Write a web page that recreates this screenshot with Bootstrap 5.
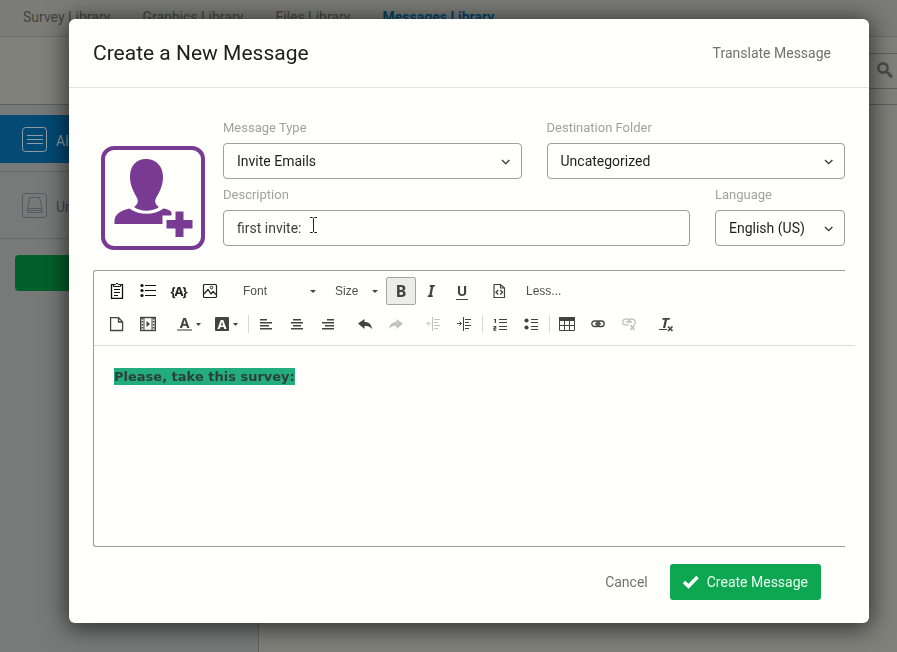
<!DOCTYPE html>
<html lang="en">
<head>
<meta charset="utf-8">
<meta name="viewport" content="width=device-width, initial-scale=1">
<title>Create a New Message</title>
<link href="https://cdn.jsdelivr.net/npm/bootstrap@5.3.0/dist/css/bootstrap.min.css" rel="stylesheet">
<style>
body{font-family:Roboto,"Noto Sans",sans-serif;font-size:14px;line-height:20px;background:#80817b;color:#3f3f3d}
.page{min-height:100vh}
.topnav{height:37px;background:#7b7c77;border-bottom:1px solid #6c6d69;padding:0 23px;gap:32px;line-height:34px}
.topnav a{color:#434341}
.topnav a.current{color:#05466b;font-weight:700}
.subbar{height:68px;border-bottom:1px solid #60615d}
.searchbox{width:56px;height:36px;border:1px solid #5e5f5b;border-right:0;color:#4c4d4a}
.side{width:259px;background:#777a79;border-right:1px solid #60625f;padding-top:10px}
.side a{height:48px;padding-left:22px;gap:9px;color:#454746}
.side a.sel{background:#034a74;color:#8f9ea6}
.side-other{border-top:1px solid #656867;border-bottom:1px solid #656867;margin-top:8px;height:68px}
.side-btn{margin:16px 15px;height:36px;background:#04602b;border-radius:4px}
.msg-dialog{max-width:none;margin:19px 28px 29px 69px}
.msg-box{background:#fffffc;border:0;border-radius:6px;box-shadow:0 3px 24px 2px rgba(0,0,0,.65)}
.msg-head{height:69px;padding:0 38px 0 24px;border-bottom:1px solid #e2e5e2}
.msg-head h1{font-size:21px;line-height:28px;font-weight:400;color:#20201e;margin:0}
.quiet{color:#71716f;font-size:14px}
.msg-body{padding:30px 24px 0}
.kind{padding:28px 18px 0 8px}
.fields{gap:6px}
.fieldrow{gap:25px}
.lang{width:130px}
.fieldrow label{font-size:13px;color:#a1a19f;line-height:20px;margin-bottom:5px}
.fieldrow .form-control,.fieldrow .form-select{height:36px;font-size:14px;line-height:20px;padding:7px 13px;border:1px solid #9d9f9a;border-radius:4px;background-color:#fffffc;color:#1f1f1d}
.fieldrow .form-control{color:#40403e}
.fieldrow .form-select{padding-right:32px;background-size:11px 11px;background-position:right 10px center;background-image:url("data:image/svg+xml,%3Csvg xmlns='http://www.w3.org/2000/svg' viewBox='0 0 11 11'%3E%3Cpath fill='none' stroke='%23333' stroke-width='1.3' d='M2 4l3.7 3.7L9.4 4'/%3E%3C/svg%3E")}
.ibeam{left:85px;top:31px}
.editor{margin-top:20px;border:1px solid #9b9d98;border-right:0;border-radius:3px 0 0 3px}
.tools{margin-right:-10px;padding:6px 8px 7px;border-bottom:1px solid #d9dcd8;gap:5px}
.tools button{width:30px;height:28px;margin-right:1px;padding:0;border:0;background:none;color:#44443f;display:inline-flex;align-items:center;justify-content:center;flex:none;border-radius:2px}
.tools button.duo{width:37px;gap:4px}
.tools button.pressed{background:#ecedea;border:1px solid #a5a7a2;margin-right:0}
.tools button:disabled{color:#c2c3bf}
.tools button.more{width:auto;margin-left:11px;font:12px "Liberation Sans",sans-serif;color:#50504e}
.tools select{appearance:none;border:0;padding:0;height:28px;font:12px "Liberation Sans",sans-serif;color:#50504e;background:url("data:image/svg+xml,%3Csvg xmlns='http://www.w3.org/2000/svg' viewBox='0 0 6 3'%3E%3Cpath fill='%23444' d='M0 0h6L3 3z'/%3E%3C/svg%3E") no-repeat right 1px center/6px 3px}
.tools svg{overflow:visible}
.pick-font{width:74px;margin:0 18px 0 17px}
.pick-size{width:44px;margin-right:7px}
.gap-l{margin-left:6px}
.sep{width:1px;height:18px;background:#d5d7d3;margin:0 2px}
.glyph{font-family:"Noto Sans",sans-serif;font-weight:700;fill:currentColor}
.letter{font:700 16px/24px "Noto Sans",sans-serif}
.letter-u{font-size:14px;line-height:16px;border-bottom:1px solid;padding:0 1px}
.writing{min-height:200px;padding:21px 20px;font:700 13px/20px "DejaVu Sans",sans-serif;color:#2b4138}
.writing span{background:#23ad7f;padding:1px 0}
.msg-foot{padding:17px 48px 23px;gap:22px}
.btn-create{height:36px;padding:0 13px 0 12px;gap:8px;background:#0ca750;border:0;border-radius:3px;color:#e9fff0;font-size:14px}
</style>
</head>
<body>
<div class="page d-flex flex-column">
  <nav class="topnav d-flex flex-shrink-0">
    <a class="text-decoration-none" href="#">Survey Library</a>
    <a class="text-decoration-none" href="#">Graphics Library</a>
    <a class="text-decoration-none" href="#">Files Library</a>
    <a class="text-decoration-none current" href="#">Messages Library</a>
  </nav>
  <div class="subbar d-flex align-items-center justify-content-end flex-shrink-0 overflow-hidden">
    <div class="searchbox d-flex align-items-center justify-content-end pe-1">
      <svg width="16" height="17" viewBox="0 0 16 17" fill="none" stroke="currentColor"><circle cx="6" cy="6" r="4.6" stroke-width="2.6"/><path d="M9.5 9.5L15 15.2" stroke-width="3.2"/></svg>
    </div>
  </div>
  <div class="d-flex flex-grow-1">
    <aside class="side">
      <a class="sel d-flex align-items-center text-decoration-none" href="#">
        <svg width="25" height="25" viewBox="0 0 25 25" fill="none" stroke="currentColor"><rect x=".5" y=".5" width="24" height="24" rx="3"/><path d="M5 8.500h16M5 12.500h16M5 16.500h16"/></svg><span class="pt-1">All Messages</span></a>
      <div class="side-other d-flex align-items-center">
        <a class="d-flex align-items-center text-decoration-none" href="#">
          <svg width="25" height="25" viewBox="0 0 25 25" fill="none" stroke="#555b5c"><rect x=".5" y=".5" width="24" height="24" rx="3"/><path d="M8 4.500h9.500L20 15.500v4H5.500v-4zM5.500 15.500h14.500M5.500 17.500h14.500"/></svg><span class="pt-1">Uncategorized</span></a>
      </div>
      <div class="side-btn"></div>
    </aside>
  </div>
</div>

<div class="modal d-block" tabindex="-1" role="dialog" aria-labelledby="dlgTitle">
  <div class="modal-dialog msg-dialog">
    <div class="modal-content msg-box">
      <header class="msg-head d-flex align-items-center justify-content-between">
        <h1 id="dlgTitle">Create a New Message</h1>
        <a class="quiet text-decoration-none" href="#">Translate Message</a>
      </header>
      <div class="msg-body">
        <div class="d-flex">
          <div class="kind flex-shrink-0">
            <svg class="d-block" width="104" height="104" viewBox="0 0 104 104" fill="#783a93"><rect x="2" y="2" width="100" height="100" rx="11" fill="none" stroke="#783a93" stroke-width="4"/><path d="M45 13c10 0 17 7 17 18 0 9-4 16-7 21-2 4 0 7 3 9-7 5-18 5-25 0 3-2 5-5 3-9-3-6-7-12-7-21 0-11 6-18 16-18z"/><path d="M28.500 62.500c9 7 25 7 34 0 4 .5 7 2 8 4v3h-9v8.500H13.500V74c1-7 8-10 15-11.500z"/><path d="M74.500 65.500h8v8.500h9v8.500h-9V91h-8v-8.500h-9V74h9z"/></svg>
          </div>
          <form class="fields d-flex flex-column flex-grow-1">
            <div class="fieldrow d-flex">
              <div class="d-flex flex-column flex-fill w-50">
                <label for="mtype">Message Type</label>
                <select class="form-select" id="mtype"><option>Invite Emails</option></select>
              </div>
              <div class="d-flex flex-column flex-fill w-50">
                <label for="folder">Destination Folder</label>
                <select class="form-select" id="folder"><option>Uncategorized</option></select>
              </div>
            </div>
            <div class="fieldrow d-flex">
              <div class="d-flex flex-column flex-grow-1 position-relative">
                <label for="desc">Description</label>
                <input class="form-control" id="desc" type="text" value="first invite:">
                <svg class="ibeam position-absolute" width="11" height="18" viewBox="0 0 11 18" fill="none" stroke="#222"><path d="M2 1.500h2.500l1 1 1-1H9M5.500 2.500v13M2 16.500h2.500l1-1 1 1H9"/></svg>
              </div>
              <div class="lang d-flex flex-column">
                <label for="lang">Language</label>
                <select class="form-select" id="lang"><option>English (US)</option></select>
              </div>
            </div>
          </form>
        </div>

        <div class="editor">
          <div class="tools d-flex flex-column">
            <div class="d-flex align-items-center">
              <button type="button" aria-label="Paste"><svg width="16" height="16" viewBox="0 0 16 16" fill="none" stroke="#111"><path d="M4.500 1.600H2.500v13.800h11V1.600h-2" stroke-width="1.300"/><path d="M4.500 3.500v-2h2c0-1.300 3-1.300 3 0h2v2zM5 6.500h6M5 9.500h6M5 12.500h4"/></svg></button>
              <button type="button" aria-label="Piped list"><svg width="16" height="16" viewBox="0 0 16 16" fill="#111"><circle cx="2" cy="2.500" r="1.600"/><circle cx="2" cy="7.500" r="1.600"/><circle cx="2" cy="12.500" r="1.600"/><path d="M5 2h11v1H5zM5 7h11v1H5zM5 12h11v1H5z"/></svg></button>
              <button type="button" aria-label="Piped text"><svg width="16" height="16" viewBox="0 0 16 16" color="#222"><text class="glyph" y="12.500" text-anchor="middle" font-size="13"><tspan x="2">{</tspan><tspan x="8">A</tspan><tspan x="14">}</tspan></text></svg></button>
              <button type="button" aria-label="Image"><svg width="16" height="16" viewBox="0 0 16 16" fill="none" stroke="#222"><rect x="1.500" y="1.500" width="13" height="13" rx="1" stroke-width="1.200"/><path d="M2 11l4-4.500 3 4.500 2-2.500 3 3" stroke-width="1.300"/><circle cx="9.500" cy="4.500" r="1.300"/></svg></button>
              <select class="pick-font" aria-label="Font"><option>Font</option></select>
              <select class="pick-size" aria-label="Size"><option>Size</option></select>
              <button class="pressed" type="button" aria-label="Bold"><span class="letter">B</span></button>
              <button type="button" aria-label="Italic"><span class="letter fst-italic">I</span></button>
              <button type="button" aria-label="Underline"><span class="letter letter-u">U</span></button>
              <button class="gap-l" type="button" aria-label="Source"><svg width="16" height="16" viewBox="0 0 16 16" fill="none" stroke="currentColor" stroke-width="1.200"><path d="M3 1.500h6.500L13.500 5v9.500H3zM9.500 1.500V5h4"/><path d="M7.200 7L5 9.300l2.200 2.200M9.300 7l2.200 2.300-2.200 2.200" stroke-width="1.400"/></svg></button>
              <button class="more" type="button">Less...</button>
            </div>
            <div class="d-flex align-items-center">
              <button type="button" aria-label="New page"><svg width="16" height="16" viewBox="0 0 16 16" fill="none" stroke="currentColor" stroke-width="1.300"><path d="M1.600 1.600h8L13.600 6v8.500h-12zM9.500 1.600V6h4"/></svg></button>
              <button type="button" aria-label="Video"><svg width="16" height="16" viewBox="0 0 16 16" fill="none" stroke="currentColor"><rect x=".7" y="1.500" width="14.600" height="13" stroke-width="1.400"/><path d="M4 2v12M12 2v12"/><path d="M2.400 2v12M13.600 2v12" stroke-dasharray="1.500 1.500" stroke-width="1.600"/><path d="M6.500 5v6L10 8z" fill="currentColor" stroke="none"/></svg></button>
              <button class="duo gap-l" type="button" aria-label="Text colour"><svg width="15" height="16" viewBox="0 0 15 16"><text class="glyph" x="7.500" y="12" text-anchor="middle" font-size="14">A</text><path d="M0 13h15v2H0z" fill="#999b98"/></svg><svg width="5" height="3" viewBox="0 0 5 3"><path fill="currentColor" d="M0 0h5L2.500 3z"/></svg></button>
              <button class="duo" type="button" aria-label="Background colour"><svg width="14" height="16" viewBox="0 0 14 16"><rect y="1" width="14" height="14" rx="1" fill="currentColor"/><text class="glyph" x="7" y="12.800" text-anchor="middle" font-size="13" color="#fff">A</text></svg><svg width="5" height="3" viewBox="0 0 5 3"><path fill="currentColor" d="M0 0h5L2.500 3z"/></svg></button>
              <span class="sep"></span>
              <button type="button" aria-label="Align left"><svg width="12" height="12" viewBox="0 0 12 12" fill="currentColor"><path d="M0 1h7v1.500H0zM0 4h12v1.500H0zM0 7h9v1.500H0zM0 10h12v1.500H0z"/></svg></button>
              <button type="button" aria-label="Centre"><svg width="12" height="12" viewBox="0 0 12 12" fill="currentColor"><path d="M2 1h8v1.500H2zM0 4h12v1.500H0zM2 7h8v1.500H2zM0 10h12v1.500H0z"/></svg></button>
              <button type="button" aria-label="Align right"><svg width="12" height="12" viewBox="0 0 12 12" fill="currentColor"><path d="M5 1h7v1.500H5zM0 4h12v1.500H0zM3 7h9v1.500H3zM0 10h12v1.500H0z"/></svg></button>
              <button class="gap-l" type="button" aria-label="Undo"><svg width="14" height="12" viewBox="0 0 14 12" fill="currentColor"><path d="M0 5.500L6.500 1v3C11 4 13.500 6.500 14 11c-2-2.500-4-3-7.500-3v3z"/></svg></button>
              <button type="button" aria-label="Redo" disabled><svg width="14" height="12" viewBox="0 0 14 12" fill="currentColor"><path d="M14 5.500L7.500 1v3C3 4 .5 6.500 0 11c2-2.500 4-3 7.500-3v3z"/></svg></button>
              <button class="gap-l" type="button" aria-label="Outdent" disabled><svg width="14" height="14" viewBox="0 0 14 14" fill="none" stroke="currentColor"><path d="M5 6.500H1M3 4.500l-2 2 2 2M6.500 0v14M8 2.500h6M8 5.500h4M8 8.500h6M8 11.500h4"/></svg></button>
              <button type="button" aria-label="Indent"><svg width="14" height="14" viewBox="0 0 14 14" fill="none" stroke="currentColor"><path d="M0 6.500h4M2.500 4.500l2 2-2 2M6.500 0v14M8 2.500h6M8 5.500h4M8 8.500h6M8 11.500h4"/></svg></button>
              <span class="sep"></span>
              <button type="button" aria-label="Numbered list"><svg width="14" height="14" viewBox="0 0 14 14" fill="none" stroke="currentColor" stroke-width="1.200"><path d="M1 2.500h1.400V6M.5 9.500h2.200v1.700H1v1.900h2.400"/><path d="M6 2.500h8M6 5.500h8M6 9.500h8M6 12.500h8" stroke-width="1"/></svg></button>
              <button type="button" aria-label="Bulleted list"><svg width="14" height="14" viewBox="0 0 14 14" fill="currentColor"><circle cx="2.500" cy="3.500" r="2.100"/><circle cx="2.500" cy="10.500" r="2.100"/><path d="M7 2h7v1H7zM7 5h7v1H7zM7 9h7v1H7zM7 12h7v1H7z"/></svg></button>
              <span class="sep"></span>
              <button type="button" aria-label="Table"><svg width="16" height="14" viewBox="0 0 16 14" fill="none" stroke="currentColor"><path d="M0 0h16v4H0z" fill="currentColor" stroke="none"/><path d="M.5 1v12.500h15V1M5.500 4v9.500M10.500 4v9.500M1 8.500h14"/></svg></button>
              <button type="button" aria-label="Link"><svg width="14" height="10" viewBox="0 0 14 10" fill="none" stroke="currentColor" stroke-width="1.300"><rect x=".8" y="2" width="7.500" height="5.500" rx="2.700"/><rect x="5.700" y="2" width="7.500" height="5.500" rx="2.700"/><path d="M4 4.800h6"/></svg></button>
              <button type="button" aria-label="Unlink" disabled><svg width="14" height="14" viewBox="0 0 14 14" fill="none" stroke="currentColor" stroke-width="1.300"><path d="M8 4.500V4c0-3-7.300-3-7.300 1s4.800 3 6.300 2.500M6 5c0-4 7.300-4 7.300 0 0 1-.3 2-1.300 2.300M4 5h6"/><path d="M8.500 8l4 5M12.500 8l-4 5" stroke-width="1.700"/></svg></button>
              <button class="gap-l" type="button" aria-label="Remove format"><svg width="16" height="16" viewBox="0 0 16 16"><text class="glyph" x="7" y="12" text-anchor="middle" font-size="15" font-style="italic">T</text><path d="M1 13h8v1H1z" fill="currentColor"/><path d="M10 10.500l4.500 4.500M14.500 10.500L10 15" stroke="currentColor" stroke-width="1.600"/></svg></button>
            </div>
          </div>
          <div class="writing" contenteditable="true" role="textbox" aria-label="Message"><span>Please, take this survey:</span></div>
        </div>
      </div>
      <footer class="msg-foot d-flex align-items-center justify-content-end">
        <a class="quiet text-decoration-none" href="#">Cancel</a>
        <button class="btn-create d-inline-flex align-items-center" type="button"><svg width="17" height="14" viewBox="0 0 17 14" fill="none" stroke="#fff" stroke-width="3.500"><path d="M2 7l4.500 4.300L15.500 2"/></svg>Create Message</button>
      </footer>
    </div>
  </div>
</div>
<script src="https://cdn.jsdelivr.net/npm/bootstrap@5.3.0/dist/js/bootstrap.bundle.min.js"></script>
</body>
</html>
